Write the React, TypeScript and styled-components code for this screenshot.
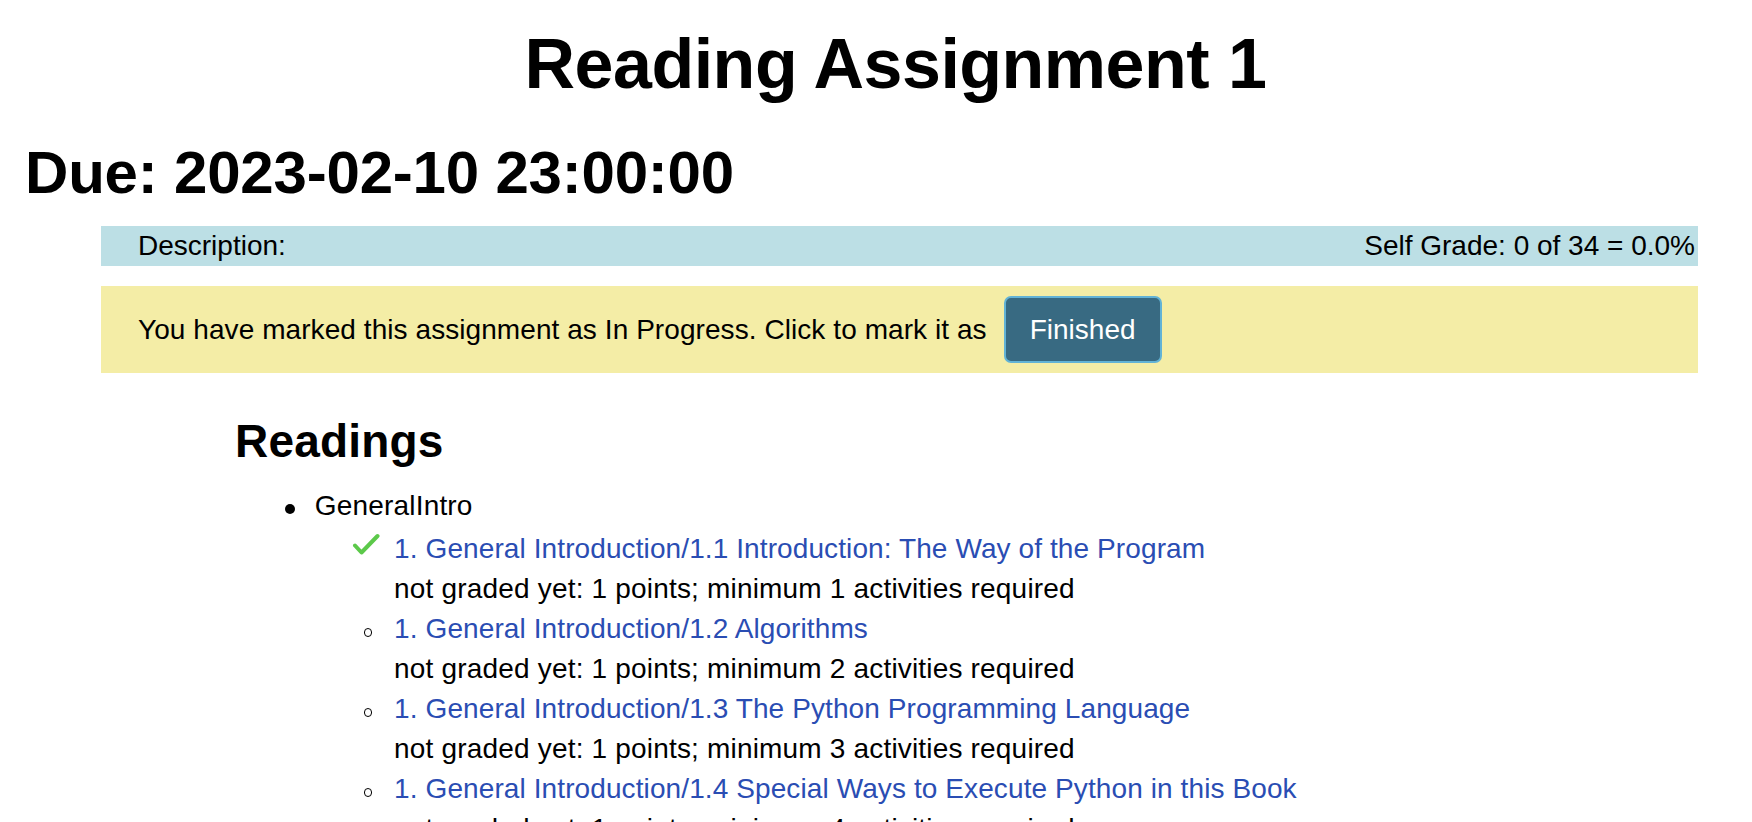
import React from "react";
import styled, { createGlobalStyle } from "styled-components";

const GlobalStyle = createGlobalStyle`
  html, body {
    margin: 0;
    padding: 0;
    background: #ffffff;
    overflow: hidden;
  }
  body {
    font-family: "Liberation Sans", Arial, Helvetica, sans-serif;
    color: #000000;
    font-size: 28px;
    line-height: 40px;
  }
`;

const Page = styled.div`
  display: flex;
  flex-direction: column;
  width: 1752px;
`;

const Title = styled.h1`
  margin: 22px 0 0;
  padding-left: 39px;
  text-align: center;
  font-size: 70px;
  line-height: 84px;
  font-weight: 700;
  letter-spacing: -0.5px;
`;

const Due = styled.h1`
  margin: 31px 0 0 25px;
  font-size: 60px;
  line-height: 72px;
  font-weight: 700;
  letter-spacing: -0.2px;
`;

const Bar = styled.div<{ $tone: "info" | "warn" }>`
  margin: ${(p) => (p.$tone === "info" ? "17px" : "20px")} 54px 0 101px;
  display: flex;
  align-items: center;
  background: ${(p) => (p.$tone === "info" ? "#bcdfe5" : "#f4eda6")};
  ${(p) =>
    p.$tone === "info"
      ? `
    justify-content: space-between;
    height: 40px;
    line-height: 40px;
    padding: 0 3px 0 37px;
  `
      : `
    gap: 17px;
    padding: 10px 37px;
  `}
`;

const WarnText = styled.span`
  letter-spacing: 0.07px;
`;

const FinishButton = styled.button`
  font-family: inherit;
  font-size: 28px;
  height: 67px;
  line-height: 63px;
  padding: 0 24px;
  color: #ffffff;
  background: #386a82;
  border: 2px solid #62b3d6;
  border-radius: 7px;
  cursor: pointer;
`;

const Heading = styled.h2`
  margin: 41px 0 0 235px;
  font-size: 46px;
  line-height: 55px;
  font-weight: 700;
  letter-spacing: 0.2px;
`;

const TopList = styled.ul`
  list-style: none;
  margin: 17.4px 0 0 284.5px;
  padding: 0;
  letter-spacing: 0.18px;
`;

const SubList = styled.ul`
  list-style: none;
  margin: 2.3px 0 0 49px;
  padding: 0;
`;

const Item = styled.li`
  display: flex;
  align-items: flex-start;
`;

const Marker = styled.span`
  flex: none;
  width: 30.3px;
  height: 40px;
`;

const Disc = styled.span`
  display: block;
  width: 10px;
  height: 10px;
  margin-top: 18px;
  border-radius: 50%;
  background: #000000;
`;

const Circle = styled.span`
  display: block;
  box-sizing: border-box;
  width: 8.5px;
  height: 8.5px;
  margin-top: 19.75px;
  border: 1.6px solid #000000;
  border-radius: 50%;
`;

const CheckIcon = styled.svg`
  display: block;
  width: 28px;
  height: 22px;
  margin: 4px 0 0 -12px;
`;

const ItemBody = styled.div`
  display: flex;
  flex-direction: column;
`;

const ReadingLink = styled.a`
  color: #2a4db3;
  text-decoration: none;
  white-space: nowrap;
  letter-spacing: 0.1px;
`;

const Note = styled.span`
  white-space: nowrap;
`;

const readings = [
  { title: "1.1 Introduction: The Way of the Program", min: 1, done: true },
  { title: "1.2 Algorithms", min: 2, done: false },
  { title: "1.3 The Python Programming Language", min: 3, done: false },
  { title: "1.4 Special Ways to Execute Python in this Book", min: 4, done: false },
];

function Check() {
  return (
    <CheckIcon viewBox="0 0 28 22" aria-hidden="true">
      <path
        d="M3 12.5 L9.5 19.5 L25.5 3"
        fill="none"
        stroke="#5cc94a"
        strokeWidth="4"
        strokeLinecap="round"
        strokeLinejoin="round"
      />
    </CheckIcon>
  );
}

export default function App() {
  return (
    <Page>
      <GlobalStyle />
      <Title>Reading Assignment 1</Title>
      <Due>Due: 2023-02-10 23:00:00</Due>
      <Bar $tone="info">
        <span>Description:</span>
        <span>Self Grade: 0 of 34 = 0.0%</span>
      </Bar>
      <Bar $tone="warn">
        <WarnText>You have marked this assignment as In Progress. Click to mark it as</WarnText>
        <FinishButton type="button">Finished</FinishButton>
      </Bar>
      <Heading>Readings</Heading>
      <TopList>
        <Item>
          <Marker>
            <Disc />
          </Marker>
          <ItemBody>
            <span>GeneralIntro</span>
            <SubList>
              {readings.map((r) => (
                <Item key={r.title}>
                  <Marker>{r.done ? <Check /> : <Circle />}</Marker>
                  <ItemBody>
                    <ReadingLink href="#">
                      1. General Introduction/{r.title}
                    </ReadingLink>
                    <Note>
                      not graded yet: 1 points; minimum {r.min} activities required
                    </Note>
                  </ItemBody>
                </Item>
              ))}
            </SubList>
          </ItemBody>
        </Item>
      </TopList>
    </Page>
  );
}
